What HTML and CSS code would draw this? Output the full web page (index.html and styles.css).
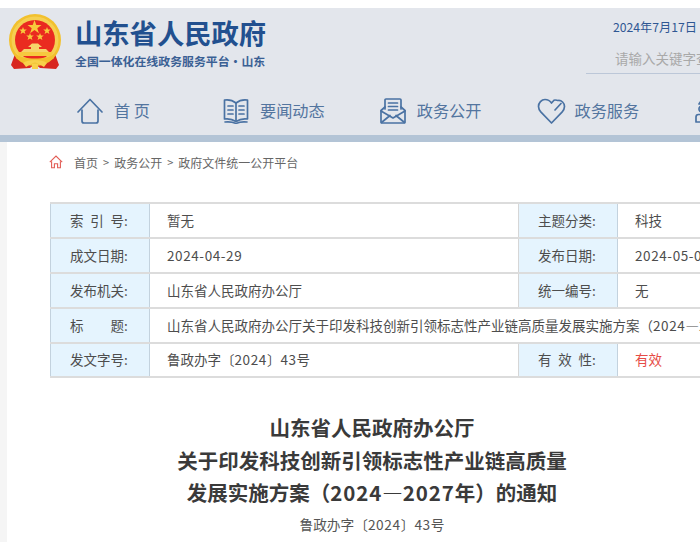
FILE: index.html
```html
<!DOCTYPE html>
<html lang="zh-CN">
<head>
<meta charset="utf-8">
<title>山东省人民政府</title>
<link rel="stylesheet" href="styles.css">
</head>
<body>
<header class="site-header">
  <div class="header-top">
    <svg class="emblem" viewBox="1 0 52 56" aria-hidden="true">
      <path d="M7 40 L3 51 L6 55 L22 54 L27 50 L32 54 L48 55 L51 51 L47 40 Z" fill="#d8261f"/>
      <circle cx="27" cy="26" r="26" fill="#f2c12e"/>
      <circle cx="27" cy="26" r="23.5" fill="#f7d561" opacity=".7"/>
      <circle cx="27" cy="26" r="20" fill="#ea2a20"/>
      <polygon points="26.5,6 28.3,11 33.5,11 29.3,14.2 30.9,19.2 26.5,16.1 22.1,19.2 23.7,14.2 19.5,11 24.7,11" fill="#f8c93c"/>
      <polygon class="star" points="15,13 16,15.6 18.8,15.6 16.6,17.3 17.4,20 15,18.4 12.6,20 13.4,17.3 11.2,15.6 14,15.6"/>
      <polygon class="star" points="39,13 40,15.6 42.8,15.6 40.6,17.3 41.4,20 39,18.4 36.6,20 37.4,17.3 35.2,15.6 38,15.6"/>
      <polygon class="star" points="22,19 23,21.6 25.8,21.6 23.6,23.3 24.4,26 22,24.4 19.6,26 20.4,23.3 18.2,21.6 21,21.6"/>
      <polygon class="star" points="32,19 33,21.6 35.8,21.6 33.6,23.3 34.4,26 32,24.4 29.6,26 30.4,23.3 28.2,21.6 31,21.6"/>
      <path d="M20 33 L24 29.5 H30 L34 33 H31 V35 H38 L41 38 H13 L16 35 H23 V33 Z" fill="#f7d36a"/>
      <path d="M9 38 H45 L43 42 H11 Z" fill="#f6c93f"/>
      <path d="M8 40 C14 46 40 46 46 40 L46 44 C40 50 14 50 8 44 Z" fill="#f2c12e"/>
      <path d="M15 49 C20 45 34 45 39 49 L36 53 L27 48 L18 53 Z" fill="#f8d04a"/>
      <path d="M24 50 H30 V55 H24 Z" fill="#f8d04a"/>
    </svg>
    <div class="brand">
      <h1 class="brand-name">山东省人民政府</h1>
      <p class="brand-sub">全国一体化在线政务服务平台·山东</p>
    </div>
    <div class="tools">
      <p class="date">2024年7月17日</p>
      <input class="search" type="text" placeholder="请输入关键字查询" aria-label="搜索">
    </div>
  </div>
  <nav class="nav">
    <a class="nav-item nav-home">
      <svg class="nav-icon" viewBox="0 0 26 26" aria-hidden="true">
        <path d="M1 14 L13 1.5 L25 14"/>
        <path d="M5 12 V23 Q5 25 7 25 H19 Q21 25 21 23 V12"/>
      </svg>
      <span class="nav-label">首 页</span>
    </a>
    <a class="nav-item">
      <svg class="nav-icon" viewBox="0 0 26 26" aria-hidden="true">
        <path d="M13 5 C10 2.5 5 1.5 1.5 2 V21 C5 20.5 10 21.5 13 23.5 C16 21.5 21 20.5 24.5 21 V2 C21 1.5 16 2.5 13 5 Z"/>
        <path d="M13 5 V23"/>
        <path d="M5 8 H10 M5 12 H10 M5 16 H10 M16 8 H21 M16 12 H21 M16 16 H21"/>
        <path d="M2 24 C7 23.5 10 24 13 25.5 C16 24 19 23.5 24 24"/>
      </svg>
      <span class="nav-label">要闻动态</span>
    </a>
    <a class="nav-item">
      <svg class="nav-icon" viewBox="0 0 26 26" aria-hidden="true">
        <path d="M5 11 V2 Q5 1 6 1 H20 Q21 1 21 2 V11"/>
        <path d="M8.5 5 H17.5 M8.5 8.5 H17.5 M8.5 12 H17.5"/>
        <path d="M5 9 L1 12.5 V24 Q1 25 2 25 H24 Q25 25 25 24 V12.5 L21 9"/>
        <path d="M1 13 L13 20 L25 13 M1.5 24.5 L10 17.5 M24.5 24.5 L16 17.5"/>
      </svg>
      <span class="nav-label">政务公开</span>
    </a>
    <a class="nav-item">
      <svg class="nav-icon nav-icon-heart" viewBox="0 0 29 26" aria-hidden="true">
        <path d="M18 12 L24 5.5 M21 2.5 C24.5 2 27.5 5 27.5 8.5 C27.5 11 26.5 12.5 25 14.2 L14.5 25 L4 14.2 C2.5 12.5 1.5 11 1.5 8.5 C1.5 5 4.5 1.5 8 1.5 C11 1.5 13 2.8 14.5 5 L17 2.2 C18 1.6 19.5 2.2 21 2.5"/>
      </svg>
      <span class="nav-label">政务服务</span>
    </a>
    <a class="nav-item">
      <svg class="nav-icon" viewBox="0 0 26 26" aria-hidden="true">
        <path d="M8 1.5 L11 6 H5 Z"/>
        <circle cx="8" cy="11" r="3"/>
        <path d="M2 24 V19 Q2 16.5 4.5 16.5 H14 M2 24 H14"/>
      </svg>
    </a>
  </nav>
</header>
<main class="content">
  <div class="crumbs">
    <svg class="crumb-icon" viewBox="0 0 14 14" aria-hidden="true">
      <path d="M.8 7.2 L7 1 L13.2 7.2"/>
      <path d="M2.6 6.2 V12.8 H5.4 V8.8 H8.6 V12.8 H11.4 V6.2"/>
    </svg>
    <span>首页</span><span class="sep">&gt;</span><span>政务公开</span><span class="sep">&gt;</span><span>政府文件统一公开平台</span>
  </div>
  <table class="meta">
    <colgroup>
      <col class="col-label"><col class="col-value"><col class="col-label2"><col class="col-rest">
    </colgroup>
    <tbody>
      <tr>
        <th><span class="lbl">索引号</span>:</th><td>暂无</td>
        <th><span class="lbl">主题分类</span>:</th><td>科技</td>
      </tr>
      <tr>
        <th><span class="lbl">成文日期</span>:</th><td><span class="num">2024-04-29</span></td>
        <th><span class="lbl">发布日期</span>:</th><td><span class="num">2024-05-06</span></td>
      </tr>
      <tr>
        <th><span class="lbl">发布机关</span>:</th><td>山东省人民政府办公厅</td>
        <th><span class="lbl">统一编号</span>:</th><td>无</td>
      </tr>
      <tr>
        <th><span class="lbl">标题</span>:</th>
        <td colspan="3">山东省人民政府办公厅关于印发科技创新引领标志性产业链高质量发展实施方案（<span class="num">2024</span>—<span class="num">2027</span>年）的通知</td>
      </tr>
      <tr>
        <th><span class="lbl">发文字号</span>:</th><td>鲁政办字〔<span class="num">2024</span>〕<span class="num">43</span>号</td>
        <th><span class="lbl">有效性</span>:</th><td class="valid">有效</td>
      </tr>
    </tbody>
  </table>
  <article class="doc">
    <h2 class="doc-title">山东省人民政府办公厅<br>关于印发科技创新引领标志性产业链高质量<br>发展实施方案（<span class="num-lg">2024</span>—<span class="num-lg">2027</span>年）的通知</h2>
    <p class="doc-no">鲁政办字〔<span class="num">2024</span>〕<span class="num">43</span>号</p>
  </article>
</main>
</body>
</html>
```
FILE: styles.css
```css
* { box-sizing: border-box; }
html, body {
  margin: 0;
  height: 550px;
  overflow: hidden;
  background: #fff;
  font-family: "Noto Sans CJK SC", "Noto Sans", sans-serif;
}
body { padding-top: 8px; }

.site-header {
  height: 134px;
  background: #e3e6ec;
  border-bottom: 7px solid #b3c4d6;
  overflow: hidden;
}
.header-top {
  display: flex;
  height: 80px;
  padding: 6px 0 0 9px;
}
.emblem { width: 52px; height: 56px; flex: none; }
.star { fill: #f8c93c; }
.brand { margin-left: 14px; flex: none; width: 511px; }
.brand-name {
  margin: 0;
  font-size: 27.3px;
  line-height: 36px;
  font-weight: 700;
  color: #22508f;
}
.brand-sub {
  margin: 2px 0 0;
  font-size: 11.9px;
  line-height: 18px;
  font-weight: 700;
  color: #3a6094;
}
.tools { flex: none; width: 140px; }
.date {
  margin: 3px 0 0 27px;
  font-size: 12.2px;
  line-height: 20px;
  white-space: nowrap;
  color: #2f5793;
}
.search {
  display: block;
  width: 140px;
  height: 26px;
  margin-top: 11px;
  padding: 0 0 5px 29px;
  border: 0;
  border-bottom: 1px solid #bcc7d8;
  background: transparent;
  font: 13.5px "Noto Sans CJK SC", sans-serif;
}
.search::placeholder { color: #a9a9a9; opacity: 1; }

.nav {
  display: flex;
  gap: 55px;
  padding-left: 77px;
  height: 40px;
  white-space: nowrap;
}
.nav-item {
  display: flex;
  flex: none;
  align-items: center;
  gap: 11px;
  height: 27px;
  margin-top: 9px;
}
.nav-home { width: 91px; }
.nav-icon {
  width: 26px;
  height: 26px;
  flex: none;
  fill: none;
  stroke: #4a72a3;
  stroke-width: 1.7;
  stroke-linecap: round;
  stroke-linejoin: round;
}
.nav-icon-heart { width: 29px; margin-right: -2px; }
.nav-label {
  margin-top: -2px;
  font-size: 16.2px;
  line-height: 24px;
  color: #53759f;
}

.content {
  height: 400px;
  padding: 10px 0 0 43px;
  border-left: 7px solid #f5f5f5;
}
.crumbs {
  display: flex;
  align-items: center;
  height: 20px;
  font-size: 12px;
  color: #666;
  white-space: nowrap;
}
.crumb-icon {
  width: 14px;
  height: 14px;
  margin: 0 11px 0 -1px;
  fill: none;
  stroke: #e25c54;
  stroke-width: 1.1;
}
.sep { margin: 0 5px; font-size: 11px; }

.meta {
  width: 700px;
  margin-top: 30px;
  border-collapse: collapse;
  table-layout: fixed;
  font-size: 13.5px;
}
.col-label { width: 99px; }
.col-value { width: 369px; }
.col-label2 { width: 99px; }
.col-rest { width: 133px; }
.meta tr:last-child th, .meta tr:last-child td { height: 34px; }
.meta th, .meta td {
  height: 35px;
  padding: 0 0 2px;
  border: 1px solid #d6d6d6;
  border-top-width: 2px;
  border-bottom-width: 2px;
  border-top-color: #dcdcdc;
  border-bottom-color: #dcdcdc;
  white-space: nowrap;
  overflow: hidden;
  font-weight: 400;
  color: #4d4d4d;
  text-align: left;
}
.meta th {
  padding-left: 19px;
  background: #e5f4fe;
  border-left-color: #c3d2de;
  border-right-color: #c3d2de;
}
.meta td { padding-left: 17px; }
.meta .valid { color: #e64b45; }
.lbl {
  display: inline-block;
  width: 54px;
  vertical-align: top;
  text-align: justify;
  text-align-last: justify;
  text-justify: inter-character;
}
.num { letter-spacing: .6px; }
.num-lg { letter-spacing: .9px; }

.doc {
  width: 644px;
  margin-top: 33px;
  text-align: center;
}
.doc-title {
  margin: 0;
  font-size: 20.5px;
  line-height: 32.5px;
  font-weight: 700;
  color: #3a3a3a;
}
.doc-no {
  margin: 4px 0 0;
  font-size: 13.7px;
  line-height: 22px;
  color: #555;
}
```
